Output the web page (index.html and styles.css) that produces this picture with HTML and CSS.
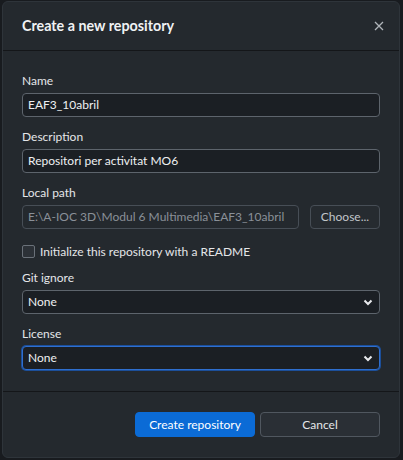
FILE: index.html
```html
<!DOCTYPE html>
<html>
<head>
<meta charset="utf-8">
<link rel="stylesheet" href="styles.css">
</head>
<body>
<div class="dialog">
  <header class="dialog-header">
    <h1 class="title">Create a new repository</h1>
    <svg class="close" width="10" height="10" viewBox="0 0 10 10"><path d="M1 1L9 9M9 1L1 9" stroke="#b0b5ba" stroke-width="1.3" fill="none"/></svg>
  </header>
  <div class="dialog-body">
    <div class="field">
      <label class="label">Name</label>
      <div class="input">EAF3_10abril</div>
    </div>
    <div class="field">
      <label class="label">Description</label>
      <div class="input">Repositori per activitat MO6</div>
    </div>
    <div class="field">
      <label class="label">Local path</label>
      <div class="path-row">
        <div class="input disabled">E:\A-IOC 3D\Modul 6 Multimedia\EAF3_10abril</div>
        <div class="button choose">Choose...</div>
      </div>
    </div>
    <div class="check-row">
      <span class="checkbox"></span>
      <span class="check-label">Initialize this repository with a README</span>
    </div>
    <div class="field">
      <label class="label">Git ignore</label>
      <div class="input select"><span>None</span><svg class="chev" width="10" height="7" viewBox="0 0 10 7"><path d="M1.5 1.5L5 5L8.5 1.5" stroke="#e8eaed" stroke-width="2" fill="none"/></svg></div>
    </div>
    <div class="field">
      <label class="label">License</label>
      <div class="input select focus"><span>None</span><svg class="chev" width="10" height="7" viewBox="0 0 10 7"><path d="M1.5 1.5L5 5L8.5 1.5" stroke="#e8eaed" stroke-width="2" fill="none"/></svg></div>
    </div>
  </div>
  <footer class="dialog-footer">
    <div class="button primary">Create repository</div>
    <div class="button">Cancel</div>
  </footer>
</div>
</body>
</html>
```
FILE: styles.css
```css
* { box-sizing: border-box; }
html, body { margin: 0; padding: 0; }
body {
  width: 403px;
  height: 460px;
  background: #181b1f;
  font-family: Lato, "Noto Sans", sans-serif;
  color: #e4e6e9;
  padding: 1px 3px 2px 2px;
}
.dialog {
  height: 457px;
  background: #24292e;
  border: 1px solid #2e343a;
  border-radius: 6px;
  display: flex;
  flex-direction: column;
}
.dialog-header {
  height: 49px;
  flex: none;
  border-bottom: 1px solid #141619;
  display: flex;
  align-items: center;
  justify-content: space-between;
  padding: 0 15px 0 19px;
}
.title {
  margin: 0;
  font-size: 14.3px;
  font-weight: 700;
  color: #f0f2f4;
  padding-bottom: 2px;
}
.close { margin-top: -1px; }
.dialog-body {
  flex: 1;
  padding: 22px 19px 0 19px;
  display: flex;
  flex-direction: column;
}
.field { display: flex; flex-direction: column; }
.field + .field, .check-row + .field { margin-top: 12px; }
.label {
  font-size: 12px;
  line-height: 16px;
  margin-bottom: 4px;
  color: #e4e6e9;
}
.input {
  height: 24px;
  background: #1b1f24;
  border: 1px solid #5d646c;
  border-radius: 4px;
  font-size: 12px;
  line-height: 22px;
  padding: 0 5px;
  color: #eef0f2;
  white-space: nowrap;
  overflow: hidden;
}
.input.disabled {
  flex: 1;
  color: #8a9098;
  background: #24292e;
  border-color: #474e56;
}
.path-row { display: flex; gap: 11px; }
.button {
  height: 24px;
  border: 1px solid #50575f;
  border-radius: 4px;
  font-size: 12px;
  line-height: 22px;
  text-align: center;
  color: #e4e6e9;
  background: #2a2f35;
}
.choose { width: 70px; flex: none; color: #c2c6ca; border-color: #474e56; background: #262b30; }
.check-row {
  display: flex;
  align-items: center;
  margin-top: 16px;
  height: 13px;
}
.checkbox {
  width: 13px;
  height: 13px;
  border: 1px solid #6a7179;
  border-radius: 2px;
  background: #2c3137;
  margin-right: 5px;
}
.check-label { font-size: 12px; color: #e4e6e9; }
.select {
  display: flex;
  align-items: center;
  justify-content: space-between;
  padding-right: 6px;
}
.select.focus { border-color: #2f6fcf; box-shadow: 0 0 0 1px #1c4f9a; }
.dialog-footer {
  height: 66px;
  flex: none;
  border-top: 1px solid #141619;
  display: flex;
  justify-content: flex-end;
  align-items: center;
  gap: 5px;
  padding: 0 19px 0 0;
}
.dialog-footer .button { width: 120px; height: 25px; line-height: 23px; }
.button.primary {
  background: #0b6bd6;
  border-color: #0b6bd6;
  color: #ffffff;
}
```
